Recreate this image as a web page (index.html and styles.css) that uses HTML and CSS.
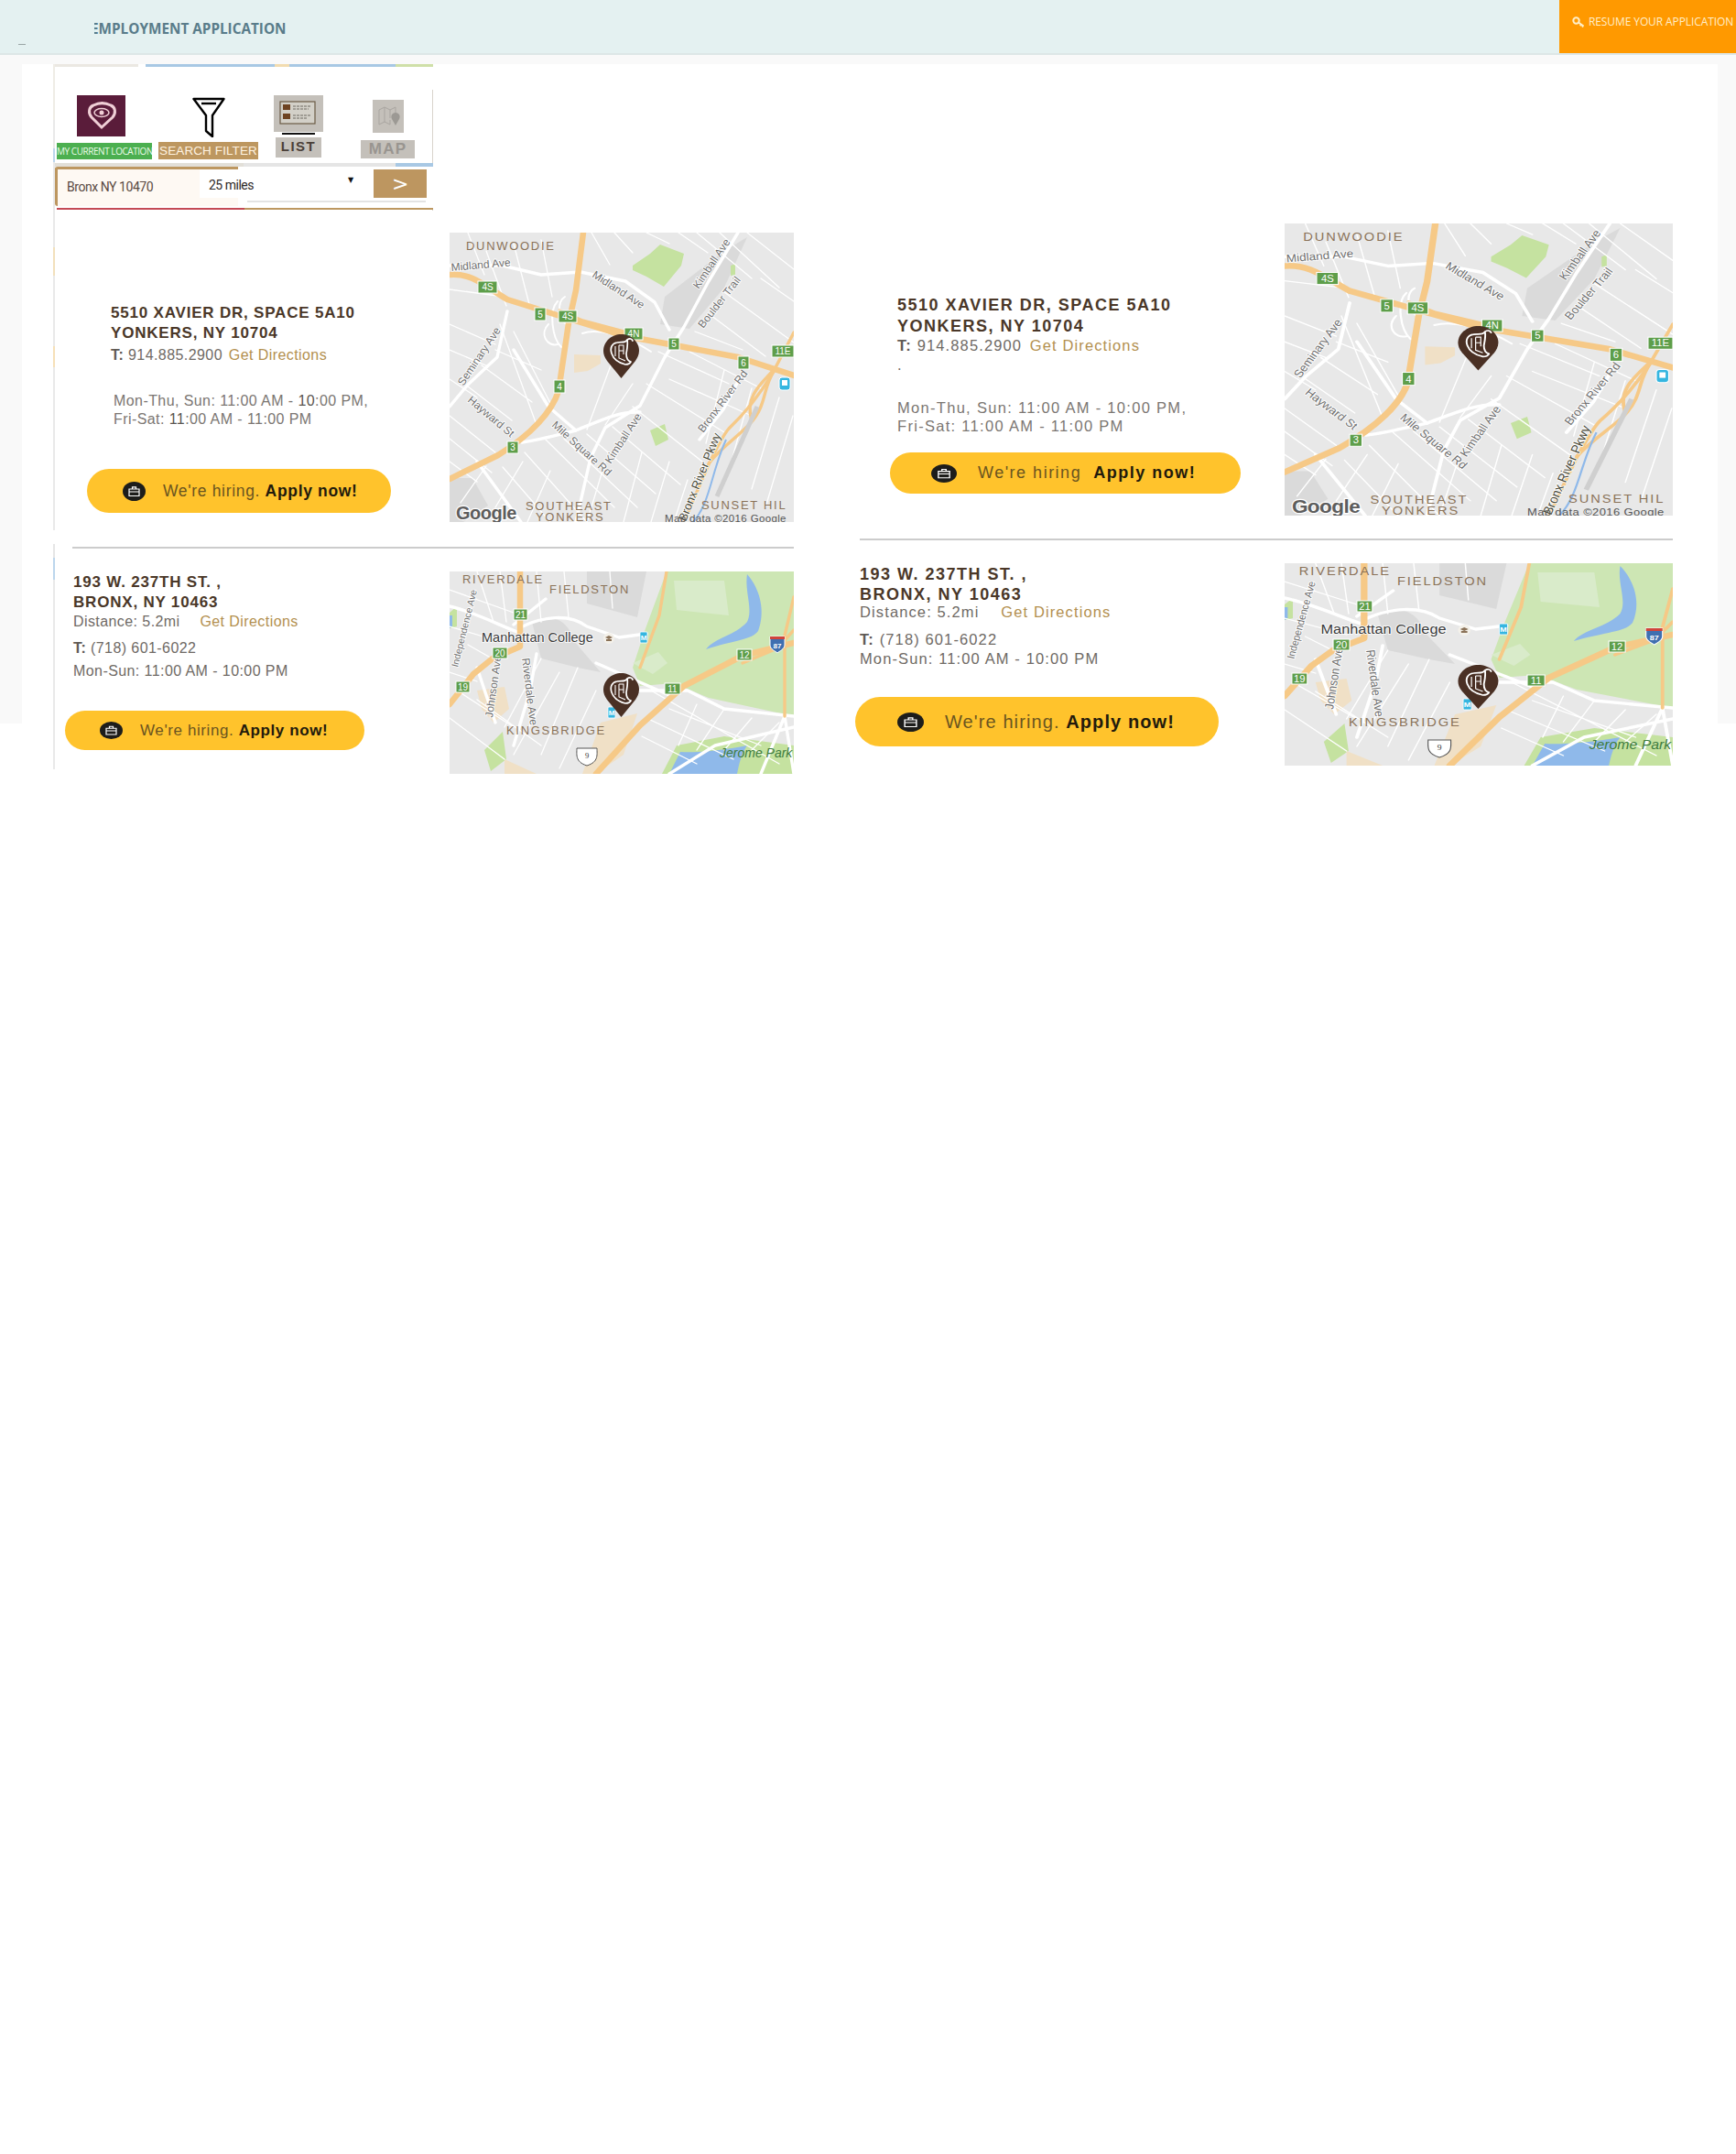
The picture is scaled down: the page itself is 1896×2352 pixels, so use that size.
FILE: index.html
```html
<!DOCTYPE html>
<html lang="en">
<head>
<meta charset="utf-8">
<title>Employment Application</title>
<link rel="stylesheet" href="styles.css">
</head>
<body>
<svg class="sprite" aria-hidden="true">
  <defs>
    <g id="pin">
      <path class="pin-body" d="M19.5 48 L4 29 C1 25 0 21 0 18 C0 8 9 0 19.5 0 C30 0 39 8 39 18 C39 22 37 26 35 29 Z"/>
      <path class="pepper" d="M26 6 C29 4 31 5 32 7 M26 6 C24 10 20 8 15 9 C9 10 7 15 9 21 C11 27 16 31 24 33 C27 33 29 32 30 30 C26 29 25 26 25 21 C26 15 27 11 26 6Z"/>
      <path class="pepper-thin" d="M13 13 V24 M17 12 H22 V22 M17 12 V26 L24 29 M17 18 H22"/>
    </g>

    <symbol id="map-one" viewBox="0 0 376 316" preserveAspectRatio="none">
      <rect class="land" width="376" height="316"/>
      <path class="patch" d="M235 70 L300 20 L325 5 L300 60 L262 105 L230 100Z"/>
      <path class="patch" d="M0 268 L25 268 L42 298 L15 316 L0 316Z"/>
      <path class="park" d="M200 36 L219 23 L230 13 L256 23 L253 36 L234 59 L215 48 L200 41Z"/>
      <path class="park" d="M219 216 L235 209 L239 226 L225 233Z"/>
      <path class="park" d="M307 36 L312 34 L312 46 L307 47Z"/>
      <path class="built" d="M136 133 L165 134 L165 143 L151 151 L136 153Z"/>

      <path class="st" d="M0 62 L60 70 M0 100 L50 122 M0 128 L42 146 M0 160 L30 180 M0 200 L50 240 M0 225 L46 262 M0 250 L30 272"/>
      <path class="st" d="M40 20 L62 80 M70 12 L88 82 M100 8 L112 70 M20 0 L38 46 M55 100 L95 210 M70 108 L112 190 M20 168 L68 205 M35 145 L90 185 M50 128 L100 150"/>
      <path class="st" d="M82 240 L150 316 M58 256 L110 316 M105 226 L180 300 M125 225 L205 300 M150 220 L225 285 M178 212 L252 275 M200 190 L276 250 M215 165 L300 218"/>
      <path class="st" d="M176 145 L150 215 M200 165 L170 210 M228 130 L305 165 M240 160 L330 200 M262 130 L340 170 M300 150 L280 230 M330 170 L305 260 M360 180 L330 280 M375 200 L345 300"/>
      <path class="st" d="M270 0 L330 50 M295 0 L360 60 M325 0 L376 40 M340 50 L376 75 M300 65 L376 120 M285 90 L345 135 M268 108 L320 128 M155 0 L175 35 M180 0 L200 22 M215 0 L240 12 M250 0 L282 22"/>
      <path class="st" d="M40 255 L12 295 M80 250 L50 300 M110 260 L85 316 M170 250 L150 316 M210 240 L190 316 M240 250 L220 316 M260 270 L245 316"/>
      <path class="rd" d="M0 36 L58 36 L100 46 L143 43 L192 53 L224 76 L240 106"/>
      <path class="rd" d="M315 0 L283 53 L256 103 L235 136 L208 189 L170 213 L154 246 L138 316"/>
      <path class="rd" d="M79 229 C105 225 120 220 138 216 C165 205 185 195 208 196"/>
      <path class="rd" d="M63 86 L52 136 L20 166 L0 190"/>
      <path class="rd" d="M70 128 L108 190 L138 216 M320 153 L299 193 L273 226 M30 250 L78 316"/>
      <path class="st thick" d="M118 75 C108 85 112 115 122 125 M126 70 C116 76 120 96 128 100 M108 100 C98 110 106 125 118 122 M145 110 C160 105 190 110 220 130"/>

      <path class="hw" d="M146 0 L138 63 L130 99 L119 173 C112 195 90 220 53 243 L0 269"/>
      <path class="hw" d="M0 46 C25 44 38 58 63 73 L127 93 L192 113 L246 123 L315 136 L376 156"/>
      <path class="hw thin" d="M120 85 L200 120 M130 92 L190 108"/>
      <path class="hw thin" d="M256 316 L283 253 C292 235 298 222 305 214 C325 195 340 175 353 153 L376 109"/>
      <path class="hw thin" d="M283 252 C305 225 330 215 340 190 C346 175 345 165 355 150 M330 205 C322 180 340 165 352 152"/>
      <path class="water-line" d="M266 316 C285 295 286 260 302 226"/>
      <path class="rail" d="M292 288 L336 190"/>

      <text class="area" x="18" y="19">DUNWOODIE</text>
      <text class="road-label" transform="translate(2 42) rotate(-5)">Midland Ave</text>
      <text class="road-label" transform="translate(155 48) rotate(33)">Midland Ave</text>
      <text class="road-label" transform="translate(272 62) rotate(-56)">Kimball Ave</text>
      <text class="road-label" transform="translate(277 105) rotate(-52)">Boulder Trail</text>
      <text class="road-label" transform="translate(15 168) rotate(-56)">Seminary Ave</text>
      <text class="road-label" transform="translate(19 184) rotate(40)">Hayward St</text>
      <text class="road-label" transform="translate(111 211) rotate(42)">Mile Square Rd</text>
      <text class="road-label" transform="translate(176 253) rotate(-57)">Kimball Ave</text>
      <text class="road-label" transform="translate(277 219) rotate(-53)">Bronx River Rd</text>
      <text class="road-label dark" transform="translate(258 316) rotate(-68)">Bronx River Pkwy</text>
      <text class="area" x="83" y="303">SOUTHEAST</text>
      <text class="area" x="94" y="315">YONKERS</text>
      <text class="area" x="275" y="302">SUNSET HIL</text>

      <g class="shield"><rect x="31" y="53" width="21" height="13"/><text x="41.5" y="63">4S</text></g>
      <g class="shield"><rect x="93" y="82" width="12" height="14"/><text x="99" y="93">5</text></g>
      <g class="shield"><rect x="119" y="85" width="20" height="13"/><text x="129" y="95">4S</text></g>
      <g class="shield"><rect x="191" y="104" width="20" height="13"/><text x="201" y="114">4N</text></g>
      <g class="shield"><rect x="239" y="115" width="12" height="13"/><text x="245" y="125">5</text></g>
      <g class="shield"><rect x="352" y="123" width="24" height="13"/><text x="364" y="133">11E</text></g>
      <g class="shield"><rect x="315" y="135" width="12" height="14"/><text x="321" y="146">6</text></g>
      <g class="shield"><rect x="114" y="161" width="12" height="14"/><text x="120" y="172">4</text></g>
      <g class="shield"><rect x="63" y="228" width="12" height="13"/><text x="69" y="238">3</text></g>
      <rect class="transit" x="360" y="158" width="12" height="14" rx="3"/>
      <rect class="transit-in" x="363" y="161" width="6" height="6"/>

      <use href="#pin" x="168" y="111"/>

      <text class="google" x="7" y="313">Google</text>
      <text class="credit" x="235" y="316">Map data ©2016 Google</text>
    </symbol>

    <symbol id="map-two" viewBox="0 0 376 221" preserveAspectRatio="none">
      <rect class="land" width="376" height="221"/>
      <path class="patch" d="M90 55 C105 45 130 50 135 75 L165 110 L140 105 L100 95Z"/>
      <path class="patch" d="M150 0 L215 0 L205 50 L150 35Z"/>
      <path class="park-soft" d="M237 0 L376 0 L376 158 L283 138 L245 122 L208 125 L200 105 L213 65Z"/>
      <path class="park-pale" d="M245 10 L300 10 L305 48 L248 42Z M200 100 L228 88 L238 100 L222 112Z"/>
      <path class="park" d="M38 195 L58 175 L62 205 L45 218Z M0 45 L8 38 L8 60 L0 62Z"/>
      <path class="park" d="M232 221 L248 190 L300 180 L376 190 L376 221Z"/>
      <path class="water" d="M325 3 C340 20 345 45 337 65 C330 75 310 75 280 85 C290 72 312 70 325 55 C332 42 322 22 325 3Z"/>
      <path class="water" d="M240 221 L252 197 C270 198 295 196 325 190 C318 200 316 212 314 221Z"/>
      <path class="water" d="M0 48 L3 48 L3 60 L0 62Z"/>
      <path class="built" d="M30 130 L60 126 L65 150 L48 165 L35 150Z M165 165 L205 155 L190 200 L160 221 L145 221Z M60 205 L95 221 L60 221Z"/>

      <path class="st" d="M0 20 L70 45 M0 60 L60 78 M20 80 L55 100 M0 110 L30 120 M8 130 L70 170 M0 160 L60 205 M30 140 L100 190"/>
      <path class="st" d="M30 0 L48 55 M55 0 L62 55 M95 0 L100 55 M125 0 L130 50 M175 0 L178 40 M100 95 L60 170 M120 110 L70 200 M140 105 L100 200 M160 130 L120 215"/>
      <path class="st" d="M220 130 L360 210 M240 150 L340 190 M215 160 L310 205 M210 180 L270 210 M270 145 L250 190 M300 150 L270 195 M330 160 L300 195 M360 165 L330 195"/>
      <path class="rd" d="M80 60 C100 50 130 45 150 60 L185 72 L215 68 M0 38 C30 45 60 62 85 70 M70 58 L105 30"/>
      <path class="rd" d="M190 130 L260 130 L300 150 L376 158 M160 100 L240 135 M366 158 L340 221 M366 158 L376 221 M376 170 L290 190 L240 221"/>
      <path class="rd" d="M95 90 L88 130 L70 190 M30 105 L50 165"/>

      <path class="hw" d="M77 0 L77 82 L47 95 L26 112 L0 145"/>
      <path class="hw thin" d="M237 0 L229 48 L208 105"/>
      <path class="hw" d="M160 221 L208 168 L256 125 L320 92 L376 78"/>
      <path class="hw thin" d="M376 28 L366 70 L366 158"/>
      <path class="hw thin" d="M376 64 L358 84 L320 100"/>

      <text class="area" x="14" y="13">RIVERDALE</text>
      <text class="area" x="109" y="24">FIELDSTON</text>
      <text class="road-label small" transform="translate(9 105) rotate(-76)">Independence Ave</text>
      <text class="poi" x="35" y="77">Manhattan College</text>
      <circle class="poi-mark" cx="174" cy="73" r="6"/>
      <path class="poi-hat" d="M170 72 L174 70 L178 72 L174 74Z M171 74 H177 V76 H171Z"/>
      <text class="road-label" transform="translate(47 160) rotate(-82)">Johnson Ave</text>
      <text class="road-label" transform="translate(79 95) rotate(83)">Riverdale Ave</text>
      <text class="area" x="62" y="178">KINGSBRIDGE</text>
      <text class="park-label" x="295" y="203">Jerome Park</text>

      <g class="shield"><rect x="70" y="41" width="15" height="12"/><text x="77.5" y="51">21</text></g>
      <g class="shield"><rect x="47" y="83" width="16" height="12"/><text x="55" y="93">20</text></g>
      <g class="shield"><rect x="7" y="120" width="15" height="12"/><text x="14.5" y="130">19</text></g>
      <g class="shield"><rect x="314" y="85" width="16" height="12"/><text x="322" y="95">12</text></g>
      <g class="shield"><rect x="235" y="122" width="17" height="12"/><text x="243.5" y="132">11</text></g>
      <path class="interstate" d="M350 71 H366 V80 C366 85 360 87 358 89 C356 87 350 85 350 80Z"/>
      <rect class="interstate-top" x="350" y="71" width="16" height="3"/>
      <text class="interstate-text" x="358" y="84">87</text>
      <g class="metro"><rect x="208" y="66" width="8" height="12" rx="1"/><text x="212" y="75">M</text></g>
      <g class="metro"><rect x="173" y="148" width="8" height="12" rx="1"/><text x="177" y="157">M</text></g>
      <path class="route" d="M139 193 H161 C161 200 163 208 150 212 C137 208 139 200 139 193Z"/>
      <text class="route-text" x="150" y="204">9</text>

      <use href="#pin" x="168" y="111"/>
    </symbol>

    <symbol id="case" viewBox="0 0 25 21" preserveAspectRatio="none">
      <ellipse class="case-bg" cx="12.5" cy="10.5" rx="12.5" ry="10.5"/>
      <path class="case-line" d="M7 8 H18 V15.5 H7Z M7 11 H18 M10.5 8 V5.8 H14.5 V8"/>
    </symbol>
  </defs>
</svg>

<header class="topbar">
  <span class="mark"></span>
  <div class="title-clip"><span class="title">EMPLOYMENT APPLICATION</span></div>
  <a class="resume">
    <svg class="key" viewBox="0 0 14 12"><circle cx="4.5" cy="4.5" r="3.2"/><path d="M7 6.5 L12.5 10.5 M10 8.5 L8.8 10.3 M12 10 L11 11.5"/></svg>
    <span class="resume-text">RESUME YOUR APPLICATION</span>
  </a>
</header>

<main class="stage">
  <div class="panel">
    <section class="col col-left">
      <div class="card">
        <div class="strip-top"></div>
        <nav class="tabs">
          <div class="tab tab-loc">
            <svg class="ic-loc" viewBox="0 0 53 45">
              <rect class="loc-bg" width="53" height="45"/>
              <path class="loc-pin" d="M27 35 L16 24 C12 19 13 13 18 11 C24 8 31 8 37 11 C42 13 43 19 39 24Z"/>
              <ellipse class="loc-eye" cx="27" cy="19" rx="8" ry="4.5"/>
              <circle class="loc-dot" cx="27" cy="19" r="2.5"/>
            </svg>
            <span class="tab-label label-green">MY CURRENT LOCATION</span>
          </div>
          <div class="tab tab-filter">
            <svg class="ic-filter" viewBox="0 0 36 44">
              <path class="filter-shape" d="M1.5 2 H34.5 L22 20 V43 L15 37 V20Z"/>
              <path class="filter-shape" d="M10 7 H26"/>
            </svg>
            <span class="tab-label label-tan">SEARCH FILTER</span>
          </div>
          <div class="tab tab-list">
            <svg class="ic-list" viewBox="0 0 54 40">
              <rect class="tile" width="54" height="40"/>
              <rect class="list-card" x="7" y="7" width="38" height="24"/>
              <rect class="list-sq" x="10" y="10" width="8" height="6"/>
              <rect class="list-sq" x="10" y="20" width="8" height="6"/>
              <path class="list-lines" d="M21 12 H41 M21 15 H38 M21 22 H41 M21 25 H36"/>
            </svg>
            <span class="list-bar"></span>
            <span class="tab-label label-list">LIST</span>
          </div>
          <div class="tab tab-map">
            <div class="map-tile-row">
              <svg class="ic-map" viewBox="0 0 34 36">
                <rect class="tile" width="34" height="36"/>
                <path class="map-fold" d="M7 11 L13 8 L19 11 L25 8 V15 M7 11 V27 L13 24 L19 27 V22 M13 8 V24 M19 11 V20"/>
                <path class="map-mark" d="M25 28 L21 21 C19 17 22 14 25 14 C28 14 31 17 29 21Z"/>
              </svg>
            </div>
            <span class="tab-label label-map">MAP</span>
          </div>
        </nav>
        <div class="strip-mid"></div>
        <div class="search">
          <div class="field">Bronx NY 10470</div>
          <div class="picker">
            <span class="miles">25 miles</span>
            <span class="arrow">▼</span>
            <button class="go" type="button">&gt;</button>
          </div>
        </div>
        <div class="search-rule"></div>
      </div>

      <article class="loc loc-l1">
        <div class="info">
          <h2 class="addr">5510 XAVIER DR, SPACE 5A10<br>YONKERS, NY 10704</h2>
          <p class="line"><b>T:</b> 914.885.2900 <a class="dir dir-near">Get Directions</a></p>
          <p class="hours"><span>Mon-Thu, Sun: 11:00 AM - <b>10</b>:00 PM,</span><br><span>Fri-Sat: <b>11</b>:00 AM - 11:00 PM</span></p>
          <a class="hire">
            <svg class="case"><use href="#case"/></svg>
            <span class="hire-text">We're hiring. <b>Apply now!</b></span>
          </a>
        </div>
        <svg class="map map-big"><use href="#map-one"/></svg>
      </article>
      <hr class="rule">
      <article class="loc loc-l2">
        <div class="info">
          <h2 class="addr">193 W. 237TH ST. ,<br>BRONX, NY 10463</h2>
          <p class="line line-dist">Distance: 5.2mi <a class="dir dir-far">Get Directions</a></p>
          <p class="line line-t"><b>T:</b> (718) 601-6022</p>
          <p class="line line-h">Mon-Sun: 11:00 AM - 10:00 PM</p>
          <a class="hire">
            <svg class="case"><use href="#case"/></svg>
            <span class="hire-text">We're hiring. <b>Apply now!</b></span>
          </a>
        </div>
        <svg class="map map-small"><use href="#map-two"/></svg>
      </article>
    </section>

    <section class="col col-right">
      <article class="loc loc-r1">
        <div class="info">
          <h2 class="addr">5510 XAVIER DR, SPACE 5A10<br>YONKERS, NY 10704</h2>
          <p class="line"><b>T:</b> 914.885.2900 <a class="dir dir-near">Get Directions</a></p>
          <p class="line dot">.</p>
          <p class="hours"><span>Mon-Thu, Sun: 11:00 AM - 10:00 PM,</span><br><span>Fri-Sat: 11:00 AM - 11:00 PM</span></p>
          <a class="hire">
            <svg class="case"><use href="#case"/></svg>
            <span class="hire-text">We're hiring&nbsp; <b>Apply now!</b></span>
          </a>
        </div>
        <svg class="map map-big"><use href="#map-one"/></svg>
      </article>
      <hr class="rule">
      <article class="loc loc-r2">
        <div class="info">
          <h2 class="addr">193 W. 237TH ST. ,<br>BRONX, NY 10463</h2>
          <p class="line line-dist">Distance: 5.2mi <a class="dir dir-far">Get Directions</a></p>
          <p class="line line-t"><b>T:</b> (718) 601-6022</p>
          <p class="line line-h">Mon-Sun: 11:00 AM - 10:00 PM</p>
          <a class="hire">
            <svg class="case"><use href="#case"/></svg>
            <span class="hire-text">We're hiring. <b>Apply now!</b></span>
          </a>
        </div>
        <svg class="map map-small"><use href="#map-two"/></svg>
      </article>
    </section>
  </div>
</main>
</body>
</html>
```
FILE: styles.css
```css
* { box-sizing: border-box; }
html, body { margin: 0; padding: 0; background: #fff; }
body { font-family: "Liberation Sans", Arial, sans-serif; color: #6f6a65; height: 2352px; overflow: hidden; }
.sprite { position: absolute; width: 0; height: 0; }

/* top bar */
.topbar { display: flex; align-items: flex-start; height: 60px; background: #e4f1f1; border-bottom: 2px solid #dde6e6; }
.mark { width: 8px; height: 1px; margin: 48px 0 0 20px; background: #9aa5a5; flex: none; }
.title-clip { margin: 20px 0 0 75px; overflow: hidden; height: 22px; width: 215px; }
.title { display: block; margin-left: -4px; font: 700 15.3px/22px "Open Sans", sans-serif; color: #597c8a; white-space: nowrap; }
.resume { margin-left: auto; width: 193px; height: 58px; padding: 15px 0 0 14px; background: #ff9900; display: flex; align-items: flex-start; flex: none; }
.key { width: 14px; height: 12px; margin-top: 3px; flex: none; fill: none; stroke: #ffefc9; stroke-width: 2; }
.resume-text { margin-left: 4px; font: 400 12px/18px "Open Sans", sans-serif; color: #ffeecb; white-space: nowrap; letter-spacing: -.1px; }

/* page frame */
.stage { height: 730px; padding: 10px 20px 0 24px; background: #f9f9f9; }
.panel { display: flex; height: 720px; padding-left: 34px; background: #fff; }
.col { flex: none; }
.col-left { width: 809px; height: 770px; border-left: 2px solid #e6e6e6; border-image: linear-gradient(#efece6 0 8%, #e9e9e9 8% 12%, #bcd6ec 12% 14%, #e9e9e9 14% 26%, #f2e0bc 26% 30%, #e9e9e9 30% 40%, #f6e0b8 40% 43%, #e9e9e9 43% 66%, #fff 66% 68%, #e6e6e6 68% 70%, #bcd6ec 70% 73%, #e9e9e9 73% 100%) 1; }
.col-right { width: 897px; margin-left: 63px; padding-top: 174px; }

/* search card */
.card { width: 413px; height: 160px; display: flex; flex-direction: column; background: linear-gradient(#d8d4cc, #d8d4cc) no-repeat right 28px / 1px 100%; }
.strip-top { height: 3px; background: linear-gradient(90deg, #ebe8e2 0 22%, #fff 22% 24%, #a8c8e4 24% 58%, #f2dcb0 58% 62%, #a8c8e4 62% 90%, #cfe0a8 90%); }
.tabs { display: flex; align-items: flex-start; height: 105px; padding-left: 2px; }
.tab { display: flex; flex-direction: column; align-items: center; flex: none; }
.tab-loc { width: 104px; margin-top: 31px; }
.tab-filter { width: 109px; margin: 33px 0 0 7px; }
.tab-list { width: 54px; margin: 31px 0 0 17px; }
.tab-map { width: 59px; margin: 36px 0 0 41px; }
.ic-loc { width: 53px; height: 45px; margin-left: -8px; display: block; }
.loc-bg { fill: #5a1c3a; }
.loc-pin { fill: none; stroke: #f0cfd6; stroke-width: 3; }
.loc-eye { fill: none; stroke: #f0cfd6; stroke-width: 1.5; }
.loc-dot { fill: #f0cfd6; }
.ic-filter { width: 36px; height: 44px; display: block; }
.filter-shape { fill: none; stroke: #000; stroke-width: 2.4; stroke-linejoin: round; }
.ic-list { width: 54px; height: 40px; display: block; }
.tile { fill: #c4c0ba; }
.list-card { fill: #d3d0c8; stroke: #6b5a45; stroke-width: 1.2; }
.list-sq { fill: #6e4322; }
.list-lines { stroke: #6f6a62; stroke-width: 1; stroke-dasharray: 3 1; }
.list-bar { width: 36px; height: 2px; margin-top: 1px; background: #111; }
.map-tile-row { width: 59px; display: flex; justify-content: flex-end; padding-right: 12px; }
.ic-map { width: 34px; height: 36px; display: block; }
.map-fold { fill: none; stroke: #a9a5a0; stroke-width: 1; }
.map-mark { fill: #9c9994; }
.tab-label { display: block; text-align: center; white-space: nowrap; overflow: hidden; }
.label-green { width: 104px; height: 18px; margin-top: 7px; background: #4caf50; color: #eafbe9; font: 400 10px/18px "Open Sans", sans-serif; letter-spacing: -.45px; }
.label-tan { width: 109px; height: 19px; margin-top: 5px; background: #bd9760; color: #fff3e0; font: 400 13.5px/19px "Liberation Sans", sans-serif; letter-spacing: .1px; }
.label-list { width: 50px; height: 22px; margin-top: 3px; background: #c4c0ba; color: #4a3f38; font: 700 15px/20px "Liberation Sans", sans-serif; letter-spacing: 1.5px; }
.label-map { width: 59px; height: 20px; margin-top: 8px; background: #c4c0ba; color: #999590; font: 700 17px/20px "Liberation Sans", sans-serif; letter-spacing: 1.2px; }

.strip-mid { height: 4px; background: linear-gradient(90deg, #e2dfd8 0 50%, #e5e5e5 50% 90%, #a8c8e4 90%); }
.search { display: flex; align-items: flex-start; height: 45px; background: #fff; }
.field { width: 200px; height: 43px; padding: 0 0 0 10px; background: #fef9f3; border-top: 3px solid #bd9760; border-left: 3px solid #bd9760; border-radius: 3px 0 0 3px; font: 400 14px/38px Roboto, sans-serif; letter-spacing: -.45px; color: #5a4a42; flex: none; }
.picker { display: flex; align-items: flex-start; width: 250px; height: 40px; margin-left: -42px; padding-left: 10px; background: linear-gradient(#e3e3e3, #e3e3e3) no-repeat 52px 37px / 195px 2px, linear-gradient(#fff, #fff) no-repeat 0 3px / 100% 31px; }
.miles { margin-top: 10px; font: 400 14px/20px Roboto, sans-serif; letter-spacing: -.5px; color: #2e2a28; white-space: nowrap; }
.arrow { margin: 8px 0 0 103px; font: 400 8px/14px "DejaVu Sans", sans-serif; color: #111; }
.go { width: 58px; height: 31px; margin: 3px 0 0 22px; padding: 0; border: 0; background: #bd9660; color: #fff; font: 400 22px/28px "DejaVu Sans", sans-serif; flex: none; }
.search-rule { height: 2px; margin-left: 2px; background: linear-gradient(90deg, #c44a55 0 50%, #bd9760 50%); }

/* location rows */
.loc { display: flex; }
.info { flex: 1 1 auto; min-width: 0; }
.map { display: block; flex: none; }
.col-left .map { width: 376px; }
.col-right .map { width: 424px; }
.col-left .map-big { height: 316px; }
.col-right .map-big { height: 319px; }
.map-small { height: 221px; }

.addr { margin: 0; font: 700 17px/22px "Liberation Sans", sans-serif; color: #4a3728; white-space: nowrap; }
.col-left .addr { letter-spacing: .8px; }
.col-right .addr { font-size: 18px; letter-spacing: 1.5px; }
.line { margin: 0; font: 400 16px/20px "Liberation Sans", sans-serif; color: #6f6a65; white-space: nowrap; }
.hours { margin: 0; font: 400 16px/20px "Liberation Sans", sans-serif; color: #7b7672; white-space: nowrap; }
.col-left .line, .col-left .hours, .col-left .dir { letter-spacing: .42px; }
.col-right .line, .col-right .dir { font-size: 16.5px; letter-spacing: 1.12px; }
.col-right .hours { font-size: 16.5px; letter-spacing: 1.3px; }
.line b { color: #5f5a55; }
.dir { color: #b3904f; }
.hours b { color: #5a5550; font-weight: 400; }

.hire { display: flex; align-items: center; background: #ffc32c; border-radius: 28px; }
.case { display: block; flex: none; }
.case-bg { fill: #1d1d1b; }
.case-line { fill: none; stroke: #fff; stroke-width: 1.2; }
.hire-text { color: #6a5420; font-family: "Liberation Sans", sans-serif; white-space: nowrap; }
.hire-text b { color: #221a0c; }

.rule { margin: 0; border: 0; height: 2px; background: #cccccc; }
.col-left .rule { margin: 27px 0 25px 19px; }
.col-right .rule { margin: 25px 0 25px 9px; }

.loc-l1 { margin-top: 24px; }
.loc-l1 .info { padding: 77px 0 0 61px; }
.loc-l1 .line { margin-top: 3px; }
.loc-l1 .dir-near { margin-left: 2px; }
.loc-l1 .hours { margin: 30px 0 0 3px; }
.loc-l1 .hire { width: 332px; height: 48px; margin: 44px 0 0 -26px; padding-left: 39px; }
.loc-l1 .case { width: 25px; height: 21px; }
.loc-l1 .hire-text { margin-left: 19px; font-size: 17.5px; letter-spacing: .67px; }

.loc-l2 .info { padding: 1px 0 0 20px; }
.loc-l2 .dir-far { margin-left: 17px; }
.loc-l2 .line-t { margin-top: 9px; }
.loc-l2 .line-h { margin-top: 5px; }
.loc-l2 .hire { width: 327px; height: 43px; margin: 33px 0 0 -9px; padding-left: 38px; }
.loc-l2 .case { width: 25px; height: 19px; }
.loc-l2 .hire-text { margin-left: 19px; font-size: 17px; letter-spacing: .6px; }

.loc-r1 .info { padding: 78px 0 0 50px; }
.loc-r1 .addr { line-height: 23px; }
.loc-r1 .line { margin-top: -1px; }
.loc-r1 .dir-near { margin-left: 3px; }
.loc-r1 .dot { margin-top: 1px; }
.loc-r1 .hours { margin-top: 27px; }
.loc-r1 .hire { width: 383px; height: 45px; margin: 19px 0 0 -8px; padding-left: 45px; }
.loc-r1 .case { width: 28px; height: 20px; }
.loc-r1 .hire-text { margin-left: 23px; font-size: 18px; letter-spacing: 1.5px; }

.loc-r2 .info { padding: 1px 0 0 9px; }
.loc-r2 .line-dist { margin-top: -2px; }
.loc-r2 .dir-far { margin-left: 18px; }
.loc-r2 .line-t { margin-top: 10px; }
.loc-r2 .line-h { margin-top: 1px; }
.loc-r2 .hire { width: 397px; height: 54px; margin: 32px 0 0 -5px; padding-left: 46px; }
.loc-r2 .case { width: 29px; height: 21px; }
.loc-r2 .hire-text { margin-left: 23px; font-size: 20px; letter-spacing: 1.1px; }

/* map drawing */
.land { fill: #e8e8e8; }
.patch { fill: #dadada; }
.park { fill: #c5e2a0; }
.park-soft { fill: #cde6b4; }
.park-pale { fill: #d9ebca; }
.built { fill: #f0e0c6; }
.water { fill: #8fb9ea; }
.water-line { fill: none; stroke: #8fb9ea; stroke-width: 2; }
.rail { fill: none; stroke: #cfcfcf; stroke-width: 5; }
.st, .rd, .hw { fill: none; stroke-linejoin: round; stroke-linecap: round; }
.st { stroke: #fff; stroke-width: 1.3; }
.st.thick { stroke-width: 2; }
.rd { stroke: #fff; stroke-width: 3.4; }
.hw { stroke: #f6c987; stroke-width: 6.5; }
.hw.thin { stroke-width: 3.4; }
.area { font: 400 13px "Liberation Sans", sans-serif; letter-spacing: 1.7px; fill: #8a7258; }
.road-label { font: 400 12px "Liberation Sans", sans-serif; fill: #6f6f6f; stroke: #fff; stroke-width: 1.6px; paint-order: stroke; }
.road-label.dark { fill: #4a4a3a; font-size: 13px; }
.road-label.small { font-size: 10.5px; }
.poi { font: 400 14.5px "Liberation Sans", sans-serif; fill: #3a3a3a; stroke: #fff; stroke-width: 1.6px; paint-order: stroke; }
.poi-mark { fill: #f4f1ea; }
.poi-hat { fill: #8a7258; }
.park-label { font: italic 400 14px "Liberation Sans", sans-serif; fill: #3f7d3f; }
.shield rect { fill: #5e9e4a; stroke: #fff; stroke-width: 1; }
.shield text { font: 400 10px "Liberation Sans", sans-serif; fill: #fff; text-anchor: middle; }
.transit { fill: #35b6e0; stroke: #fff; stroke-width: 1; }
.transit-in { fill: #fff; }
.metro rect { fill: #35b6e0; stroke: #fff; stroke-width: .8; }
.metro text { font: 700 8px "Liberation Sans", sans-serif; fill: #fff; text-anchor: middle; }
.interstate { fill: #3f6fb0; stroke: #fff; stroke-width: 1; }
.interstate-top { fill: #d0443c; }
.interstate-text { font: 700 8px "Liberation Sans", sans-serif; fill: #fff; text-anchor: middle; }
.route { fill: #fff; stroke: #555; stroke-width: 1; }
.route-text { font: 400 8.5px "Liberation Serif", serif; fill: #333; text-anchor: middle; }
.google { font: 700 20px "Liberation Sans", sans-serif; fill: #5d5d5d; stroke: #fff; stroke-width: 2.4px; paint-order: stroke; letter-spacing: -.5px; }
.credit { font: 400 11.5px "Liberation Sans", sans-serif; fill: #555; letter-spacing: .35px; }
.pin-body { fill: #4a3024; }
.pepper { fill: none; stroke: #fff; stroke-width: 1.7; stroke-linejoin: round; stroke-linecap: round; }
.pepper-thin { fill: none; stroke: #fff; stroke-width: 1.1; }
```
